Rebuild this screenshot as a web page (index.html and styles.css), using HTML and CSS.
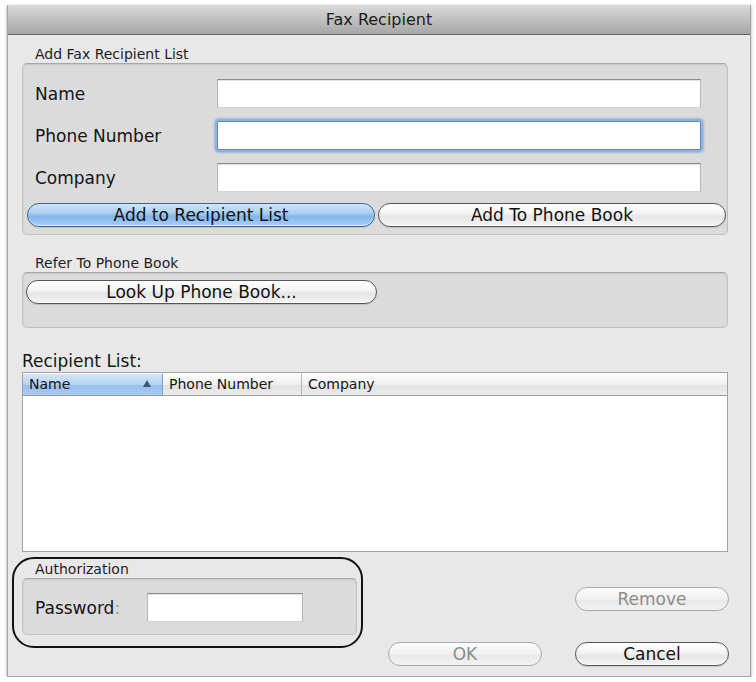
FILE: index.html
```html
<!DOCTYPE html>
<html lang="en">
<head>
<meta charset="utf-8">
<title>Fax Recipient</title>
<link rel="stylesheet" href="styles.css">
</head>
<body>
<div class="window">
  <div class="titlebar">Fax Recipient</div>
  <div class="content">

    <div class="legend legend-first">Add Fax Recipient List</div>
    <div class="group group-add">
      <div class="fields">
        <label class="field-label" for="f-name">Name</label>
        <input class="text-input" id="f-name" type="text">
        <label class="field-label" for="f-phone">Phone Number</label>
        <input class="text-input is-focused" id="f-phone" type="text">
        <label class="field-label" for="f-company">Company</label>
        <input class="text-input" id="f-company" type="text">
      </div>
      <div class="button-row">
        <button class="btn btn-default" type="button">Add to Recipient List</button>
        <button class="btn" type="button">Add To Phone Book</button>
      </div>
    </div>

    <div class="legend legend-spaced">Refer To Phone Book</div>
    <div class="group group-book">
      <button class="btn btn-lookup" type="button">Look Up Phone Book...</button>
    </div>

    <div class="list-title">Recipient List:</div>
    <div class="table">
      <div class="table-head">
        <div class="col col-name is-sorted">Name<span class="sort-arrow"></span></div>
        <div class="col col-phone">Phone Number</div>
        <div class="col col-company">Company</div>
      </div>
      <div class="table-body"></div>
    </div>

    <div class="bottom">
      <div class="auth">
        <div class="legend legend-auth">Authorization</div>
        <div class="group group-auth">
          <label class="field-label auth-label" for="f-pass">Password<span class="colon">:</span></label>
          <input class="text-input pass-input" id="f-pass" type="password">
        </div>
      </div>
      <div class="actions">
        <button class="btn btn-action is-disabled" type="button">Remove</button>
        <div class="dialog-buttons">
          <button class="btn btn-action is-disabled" type="button">OK</button>
          <button class="btn btn-action" type="button">Cancel</button>
        </div>
      </div>
    </div>

  </div>
</div>
</body>
</html>
```

FILE: styles.css
```css
* {
  box-sizing: border-box;
}

html,
body {
  margin: 0;
  background: #ffffff;
}

body {
  font-family: "DejaVu Sans", "Liberation Sans", sans-serif;
  color: #161616;
}

/* dialog frame */
.window {
  margin: 5px 0 0 7px;
  width: 744px;
  height: 672px;
  background: #e8e8e8;
  border: 1px solid #a4a4a4;
  border-top: none;
  box-shadow: 0 1px 3px rgba(0, 0, 0, 0.35);
  display: flex;
  flex-direction: column;
}

.titlebar {
  height: 30px;
  flex: none;
  text-align: center;
  font-size: 16px;
  line-height: 29px;
  color: #1c1c1c;
  background: linear-gradient(#dadada 0%, #c0c0c0 50%, #a6a6a6 100%);
  border-bottom: 1px solid #5f5f5f;
}

.content {
  flex: 1;
  padding: 11px 22px 0 14px;
  display: flex;
  flex-direction: column;
}

/* group captions */
.legend {
  font-size: 14px;
  line-height: 17px;
  padding-left: 13px;
  color: #1e1e1e;
}

.legend-spaced {
  margin-top: 20px;
}

.legend-auth {
  margin-top: 0;
}

/* inset group boxes */
.group {
  background: #dbdbdb;
  border: 1px solid #c2c2c2;
  border-top-color: #a8a8a8;
  border-radius: 5px;
  box-shadow: inset 0 1px 2px rgba(0, 0, 0, 0.1);
}

.group-add {
  padding: 15px 1px 7px 4px;
}

.fields {
  margin-left: 8px;
  display: grid;
  grid-template-columns: 182px 484px;
  row-gap: 13px;
  align-items: center;
  margin-bottom: 11px;
}

.field-label {
  font-size: 17px;
  line-height: 20px;
  color: #141414;
}

.text-input {
  height: 29px;
  margin: 0;
  padding: 0 4px;
  background: #ffffff;
  border: 1px solid #b8b8b8;
  border-top-color: #8a8a8a;
  border-bottom-color: #d4d4d4;
  border-radius: 0;
  font: inherit;
  outline: none;
  box-shadow: inset 0 1px 1px rgba(0, 0, 0, 0.12);
}

.text-input.is-focused {
  border-color: #5f88bf;
  box-shadow: 0 0 0 2px #8fb2df, 0 0 2px 3px rgba(110, 150, 210, 0.5);
  border-radius: 2px;
}

.button-row {
  display: flex;
  gap: 3px;
}

.button-row .btn {
  flex: 1;
}

/* aqua push buttons */
.btn {
  height: 24px;
  margin: 0;
  padding: 0 10px;
  border: 1px solid #555555;
  border-radius: 12px;
  font-family: inherit;
  font-size: 17px;
  line-height: 21px;
  color: #111111;
  background: linear-gradient(#ffffff 0%, #f4f4f4 42%, #e6e6e6 56%, #f3f3f3 100%);
  box-shadow: inset 0 -1px 1px rgba(255, 255, 255, 0.8), 0 1px 1px rgba(0, 0, 0, 0.12);
  white-space: nowrap;
  cursor: default;
}

.btn-default {
  border-color: #3b6597;
  background: linear-gradient(#d2e6f9 0%, #a9cdf1 42%, #83b5ea 56%, #a6cff5 100%);
}

.btn.is-disabled {
  border-color: #a9a9a9;
  color: #8c8c8c;
  background: linear-gradient(#fbfbfb 0%, #f0f0f0 50%, #e9e9e9 56%, #f2f2f2 100%);
  box-shadow: none;
}

.group-book {
  padding: 7px 4px 23px 3px;
}

.btn-lookup {
  width: 351px;
}

/* recipient table */
.list-title {
  margin-top: 23px;
  font-size: 17px;
  line-height: 20px;
  margin-bottom: 1px;
}

.table {
  height: 180px;
  background: #ffffff;
  border: 1px solid #a1a1a1;
  display: flex;
  flex-direction: column;
}

.table-head {
  height: 23px;
  flex: none;
  display: flex;
  border-top: 1px solid #ffffff;
  border-bottom: 1px solid #9c9c9c;
  background: linear-gradient(#fcfcfc 0%, #f0f0f0 50%, #e2e2e2 55%, #ececec 100%);
}

.col {
  position: relative;
  font-size: 14px;
  line-height: 21px;
  padding-left: 6px;
  border-right: 1px solid #b4b4b4;
  color: #151515;
}

.col-name {
  width: 140px;
}

.col-phone {
  width: 139px;
}

.col-company {
  flex: 1;
  border-right: none;
}

.col.is-sorted {
  background: linear-gradient(#d6e7f8 0%, #b4d2f2 50%, #97bfec 55%, #a9cbf0 100%);
  border-right-color: #7f9fc6;
}

.sort-arrow {
  position: absolute;
  right: 11px;
  top: 6px;
  width: 0;
  height: 0;
  border-left: 4px solid transparent;
  border-right: 4px solid transparent;
  border-bottom: 7px solid #3f5877;
}

.table-body {
  flex: 1;
}

/* authorization and dialog buttons */
.bottom {
  margin-top: 9px;
  display: flex;
  align-items: flex-start;
  justify-content: space-between;
}

.auth {
  position: relative;
  width: 335px;
}

/* hand-drawn highlight ring around the authorization box */
.auth::after {
  content: "";
  position: absolute;
  top: -4px;
  left: -10px;
  right: -6px;
  bottom: -13px;
  border: 2px solid #121212;
  border-radius: 22px;
  pointer-events: none;
}

.group-auth {
  padding: 14px 0 12px 12px;
  display: flex;
  align-items: center;
}

.auth-label {
  width: 112px;
  flex: none;
}

.colon {
  color: #9a9a9a;
}

.pass-input {
  width: 156px;
}

.actions {
  margin-right: -1px;
  padding-top: 26px;
  display: flex;
  flex-direction: column;
  align-items: flex-end;
  gap: 31px;
}

.btn-action {
  width: 154px;
}

.dialog-buttons {
  display: flex;
  gap: 33px;
}
```
